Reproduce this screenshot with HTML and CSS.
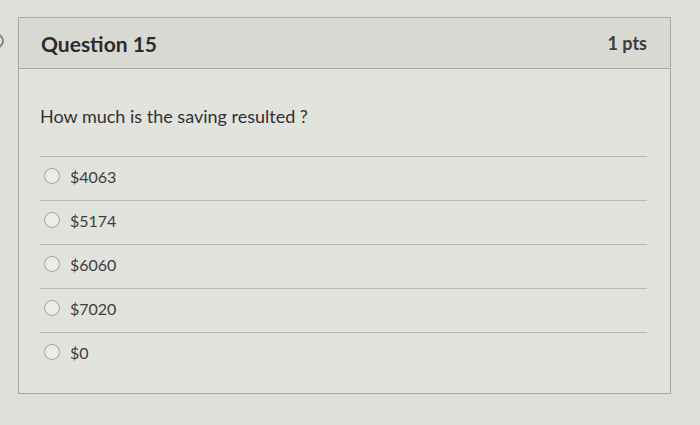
FILE: index.html
```html
<!DOCTYPE html>
<html>
<head>
<meta charset="utf-8">
<link rel="stylesheet" href="styles.css">
</head>
<body>
<div class="page">
  <div class="side">
    <svg class="chev" width="10" height="16" viewBox="0 0 10 16"><path d="M-1 1.5 Q7 8 -1 14.5" fill="none" stroke="#7a7a78" stroke-width="1.6"/></svg>
  </div>
  <div class="quiz">
    <div class="header">
      <div class="title">Question 15</div>
      <div class="pts">1 pts</div>
    </div>
    <div class="body">
      <div class="qtext">How much is the saving resulted ?</div>
      <div class="answers">
        <div class="ans"><span class="radio"></span><span class="lbl">$4063</span></div>
        <div class="ans"><span class="radio"></span><span class="lbl">$5174</span></div>
        <div class="ans"><span class="radio"></span><span class="lbl">$6060</span></div>
        <div class="ans"><span class="radio"></span><span class="lbl">$7020</span></div>
        <div class="ans"><span class="radio"></span><span class="lbl">$0</span></div>
      </div>
    </div>
  </div>
</div>
</body>
</html>
```
FILE: styles.css
```css
html, body {
  margin: 0;
  padding: 0;
}
body {
  width: 700px;
  height: 425px;
  overflow: hidden;
  background: #dededa;
  font-family: Lato, "Liberation Sans", sans-serif;
  color: #2f3133;
}
.page {
  display: flex;
  padding-top: 17px;
}
.side {
  width: 18px;
  display: flex;
  align-items: flex-start;
  padding-top: 16px;
  box-sizing: border-box;
}
.chev {
  display: block;
}
.quiz {
  width: 653px;
  height: 377px;
  box-sizing: border-box;
  border: 1px solid #a9a9a5;
  background: #e3e3de;
}
.header {
  height: 51px;
  box-sizing: border-box;
  border-bottom: 1px solid #a9a9a5;
  background: #d9d9d4;
  display: flex;
  align-items: center;
  justify-content: space-between;
  padding: 0 23px 0 22px;
}
.title {
  font-size: 21px;
  font-weight: 700;
  color: #2a2c2e;
}
.pts {
  font-size: 18px;
  font-weight: 700;
  color: #3a3c3e;
}
.body {
  padding: 37px 23px 0 21px;
}
.qtext {
  font-size: 18px;
  color: #2f3133;
  height: 20px;
  line-height: 20px;
}
.answers {
  margin-top: 30px;
}
.ans {
  height: 44px;
  box-sizing: border-box;
  border-top: 1px solid #b9b9b5;
  display: flex;
  align-items: center;
  padding: 0 0 5px 4px;
}
.radio {
  width: 14px;
  height: 14px;
  border-radius: 50%;
  border: 1px solid #a3a3a0;
  background: #ecece8;
  margin-right: 10px;
}
.lbl {
  font-size: 16px;
  color: #3c3e40;
}
```
